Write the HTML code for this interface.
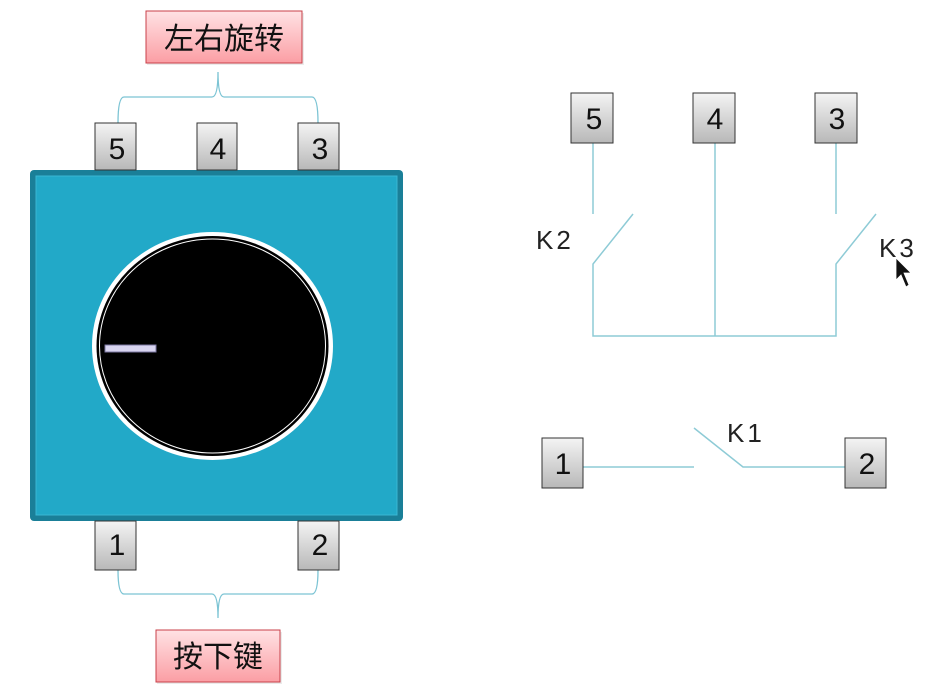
<!DOCTYPE html>
<html><head><meta charset="utf-8"><style>
html,body{margin:0;padding:0;background:#fff;width:946px;height:693px;overflow:hidden}
text{font-family:"Liberation Sans","DejaVu Sans",sans-serif}
.cjk{font-family:"Liberation Sans","Noto Sans CJK SC",sans-serif}
</style></head><body>
<svg width="946" height="693" viewBox="0 0 946 693" xmlns="http://www.w3.org/2000/svg">
<defs>
<linearGradient id="gb" x1="0" y1="0" x2="0" y2="1"><stop offset="0" stop-color="#f4f4f4"/><stop offset="1" stop-color="#b8b8b8"/></linearGradient>
<linearGradient id="gr" x1="0" y1="0" x2="0" y2="1"><stop offset="0" stop-color="#ffe2e4"/><stop offset="1" stop-color="#fb9ea4"/></linearGradient>
</defs>
<rect x="147" y="13" width="157" height="52" fill="#ddd" opacity="0.6"/>
<rect x="146" y="11" width="156" height="52" fill="url(#gr)" stroke="#c8404a" stroke-width="1"/>
<text x="224" y="49" font-size="30" text-anchor="middle" class="cjk" fill="#111">左右旋转</text>
<rect x="157" y="632" width="125" height="52" fill="#ddd" opacity="0.6"/>
<rect x="156" y="630" width="124" height="52" fill="url(#gr)" stroke="#c8404a" stroke-width="1"/>
<text x="218" y="667" font-size="30" text-anchor="middle" class="cjk" fill="#111">按下键</text>
<g fill="none" stroke="#7cc4d4" stroke-width="1.3">
<path d="M118 123 Q118 97 124 97 L212 97 Q218 97 218 72 Q218 97 224 97 L312 97 Q318 97 318 123"/>
<path d="M118 570 Q118 594 124 594 L212 594 Q218 594 218 618 Q218 594 224 594 L312 594 Q318 594 318 570"/>
</g>
<rect x="30" y="170" width="373" height="351" rx="4" fill="#1a7f98"/>
<rect x="36" y="176" width="361" height="339" fill="#22a9c8" stroke="#3bb6d2" stroke-width="1"/>
<ellipse cx="212.5" cy="346" rx="120.5" ry="114" fill="#fff"/>
<ellipse cx="212.5" cy="346" rx="116" ry="110" fill="#000"/>
<ellipse cx="212.5" cy="346" rx="113" ry="107" fill="none" stroke="#fff" stroke-width="1"/>
<rect x="105" y="345" width="51" height="7" fill="#d8d4f0" stroke="#7a76a0" stroke-width="1"/>
<g stroke="#333" stroke-width="1" fill="url(#gb)">
<rect x="95" y="123" width="41" height="47"/><rect x="197" y="123" width="40" height="47"/><rect x="298" y="123" width="41" height="47"/>
<rect x="95" y="521" width="41" height="49"/><rect x="298" y="521" width="41" height="49"/>
</g>
<g font-size="30" text-anchor="middle" fill="#111">
<text x="117" y="159">5</text><text x="218" y="159">4</text><text x="320" y="159">3</text>
<text x="117" y="555">1</text><text x="320" y="555">2</text>
</g>
<g fill="none" stroke="#8ecbd6" stroke-width="1.5">
<path d="M593 143 V214 M633 214 L593 264 V336 H836 V264 L876 214 M836 214 V143 M715 143 V336"/>
<path d="M583 467 H694 M694 428 L743 467 H845"/>
</g>
<g stroke="#333" stroke-width="1" fill="url(#gb)">
<rect x="571" y="93" width="42" height="50"/><rect x="693" y="93" width="42" height="50"/><rect x="815" y="93" width="42" height="50"/>
<rect x="542" y="438" width="41" height="50"/><rect x="845" y="438" width="41" height="50"/>
</g>
<g font-size="30" text-anchor="middle" fill="#111">
<text x="594" y="129">5</text><text x="715" y="129">4</text><text x="837" y="129">3</text>
<text x="563" y="474">1</text><text x="867" y="474">2</text>
</g>
<g font-size="26" fill="#222" letter-spacing="3">
<text x="536" y="249">K2</text><text x="879" y="257">K3</text><text x="727" y="442">K1</text>
</g>
<path d="M896 258 L896 280 L901 275 L906 287 L909 285 L904 273 L911 273 Z" fill="#111" stroke="#fff" stroke-width="0.8"/>
</svg>
</body></html>
